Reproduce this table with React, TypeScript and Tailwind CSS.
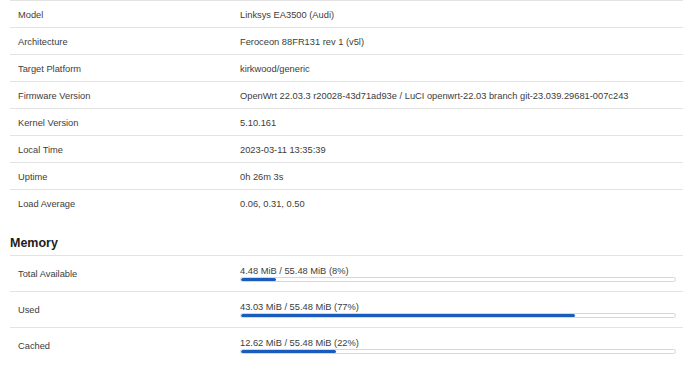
const SYSTEM: [string, string][] = [
  ["Model", "Linksys EA3500 (Audi)"],
  ["Architecture", "Feroceon 88FR131 rev 1 (v5l)"],
  ["Target Platform", "kirkwood/generic"],
  ["Firmware Version", "OpenWrt 22.03.3 r20028-43d71ad93e / LuCI openwrt-22.03 branch git-23.039.29681-007c243"],
  ["Kernel Version", "5.10.161"],
  ["Local Time", "2023-03-11 13:35:39"],
  ["Uptime", "0h 26m 3s"],
  ["Load Average", "0.06, 0.31, 0.50"],
];

const MEMORY: { label: string; used: string; pct: number }[] = [
  { label: "Total Available", used: "4.48 MiB", pct: 8 },
  { label: "Used", used: "43.03 MiB", pct: 77 },
  { label: "Cached", used: "12.62 MiB", pct: 22 },
];

export default function App() {
  return (
    <div
      className="w-[690px] h-[380px] overflow-hidden bg-white pl-[10px] pr-[7px] text-[9.3px] text-[#3c3c3c]"
      style={{ fontFamily: '"Liberation Sans", Arial, sans-serif' }}
    >
      <div>
        {SYSTEM.map(([k, v]) => (
          <div key={k} className="flex h-[27px] items-center border-t border-[#e3e3e3] pt-[3px]">
            <div className="w-[222px] shrink-0 pl-2">{k}</div>
            <div className="pl-2 whitespace-nowrap">{v}</div>
          </div>
        ))}
      </div>

      <h3 className="mt-[20px] mb-[4px] h-[15px] text-[12.5px] font-bold leading-[15px] text-[#1d1d1d]">Memory</h3>

      <div>
        {MEMORY.map((m) => (
          <div key={m.label} className="flex h-[36px] items-center border-t border-[#e3e3e3]">
            <div className="w-[222px] shrink-0 pl-2 pt-[2px]">{m.label}</div>
            <div className="flex-1 pl-2 pr-[7px]">
              <div className="leading-[11px]">
                {m.used} / 55.48 MiB ({m.pct}%)
              </div>
              <div className="h-[5px] rounded-full border border-[#d6d6d6] bg-white overflow-hidden">
                <div className="h-full rounded-full bg-[#1a5cbd]" style={{ width: `${m.pct}%` }} />
              </div>
            </div>
          </div>
        ))}
      </div>
    </div>
  );
}
